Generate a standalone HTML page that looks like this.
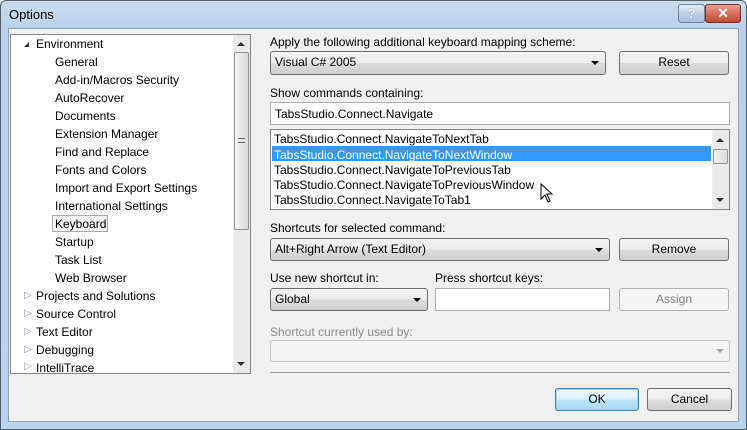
<!DOCTYPE html>
<html><head><style>
*{box-sizing:border-box;margin:0;padding:0}
body{width:747px;height:430px;overflow:hidden;background:#fff;font-family:"Liberation Sans",sans-serif;font-size:12px;color:#000;position:relative}
.frame{position:absolute;left:0;top:0;width:747px;height:430px;background:linear-gradient(#c9dbef,#b9d1ea 30px,#bcd3ec);border:1px solid #555e69;border-radius:6px 6px 0 0}
.title{position:absolute;left:8px;top:6px;font-size:13px;color:#000}
.client{position:absolute;left:8px;top:28px;width:731px;height:394px;background:#f0f0f0;border:1px solid #8ea4bd}
.a{position:absolute}
.btn{position:absolute;border:1px solid #707070;border-radius:3px;background:linear-gradient(#f2f2f2 0,#ebebeb 50%,#dddddd 50%,#cfcfcf);text-align:center;line-height:21px}
.combo{position:absolute;border:1px solid #707070;border-radius:3px;background:linear-gradient(#f2f2f2 0,#ebebeb 50%,#dddddd 50%,#cfcfcf);padding-left:4px;line-height:21px}
.combo:after{content:"";position:absolute;right:6px;top:9px;border-left:4px solid transparent;border-right:4px solid transparent;border-top:4px solid #000}
.box{position:absolute;background:#fff;border:1px solid #828790}
.t{position:absolute;white-space:nowrap;transform:translateY(1px)}
.lbl{position:absolute;white-space:nowrap;transform:translateY(1px)}
.sb{position:absolute;background:#e9e9e9;border-left:1px solid #eee}
</style></head><body>
<div class="frame">
<div class="title">Options</div>
<div class="a" style="left:677px;top:3px;width:27px;height:19px;border:1px solid #6d8199;border-radius:3px;background:linear-gradient(#e2ecf7,#bcd0e6 50%,#a9c0db);text-align:center;font-weight:bold;color:#fff;text-shadow:0 0 1px #333;line-height:17px;font-size:13px">?</div>
<div class="a" style="left:704px;top:3px;width:36px;height:19px;border:1px solid #7e2f25;border-radius:3px;background:linear-gradient(#e8a293,#d4725f 50%,#c24a34);text-align:center;font-weight:bold;color:#fff;line-height:17px;font-size:14px">✕</div>
</div>
<div class="client"></div>

<div class="box" style="left:10px;top:34px;width:241px;height:340px"></div>
<div class="sb" style="left:233px;top:35px;width:17px;height:338px"></div>
<div class="a" style="left:237px;top:42px;border-left:4px solid transparent;border-right:4px solid transparent;border-bottom:4px solid #333"></div>
<div class="a" style="left:234px;top:52px;width:15px;height:178px;border:1px solid #959595;border-radius:2px;background:linear-gradient(90deg,#f3f3f3,#dadada)"></div>
<div class="a" style="left:238px;top:138px;width:7px;height:5px;border-top:1px solid #666;border-bottom:1px solid #666"></div>
<div class="a" style="left:237px;top:362px;border-left:4px solid transparent;border-right:4px solid transparent;border-top:4px solid #333"></div>
<div class="a" style="left:24px;top:42px;border-left:5px solid transparent;border-bottom:5px solid #333"></div>
<div class="t" style="left:36px;top:36px">Environment</div>
<div class="t" style="left:55px;top:54px">General</div>
<div class="t" style="left:55px;top:72px">Add-in/Macros Security</div>
<div class="t" style="left:55px;top:90px">AutoRecover</div>
<div class="t" style="left:55px;top:108px">Documents</div>
<div class="t" style="left:55px;top:126px">Extension Manager</div>
<div class="t" style="left:55px;top:144px">Find and Replace</div>
<div class="t" style="left:55px;top:162px">Fonts and Colors</div>
<div class="t" style="left:55px;top:180px">Import and Export Settings</div>
<div class="t" style="left:55px;top:198px">International Settings</div>
<div class="a" style="left:52px;top:215px;width:56px;height:17px;border:1px solid #aaa;background:#f3f3f3"></div>
<div class="t" style="left:55px;top:216px">Keyboard</div>
<div class="t" style="left:55px;top:234px">Startup</div>
<div class="t" style="left:55px;top:252px">Task List</div>
<div class="t" style="left:55px;top:270px">Web Browser</div>
<div class="t" style="left:24px;top:289px;color:#999;font-size:10px">▷</div>
<div class="t" style="left:36px;top:288px">Projects and Solutions</div>
<div class="t" style="left:24px;top:307px;color:#999;font-size:10px">▷</div>
<div class="t" style="left:36px;top:306px">Source Control</div>
<div class="t" style="left:24px;top:325px;color:#999;font-size:10px">▷</div>
<div class="t" style="left:36px;top:324px">Text Editor</div>
<div class="t" style="left:24px;top:343px;color:#999;font-size:10px">▷</div>
<div class="t" style="left:36px;top:342px">Debugging</div>
<div class="a" style="left:11px;top:358px;width:222px;height:15px;overflow:hidden"><div class="t" style="left:13px;top:2px;color:#999;font-size:10px">▷</div><div class="t" style="left:25px;top:2px">IntelliTrace</div></div>

<div class="lbl" style="left:270px;top:34px">Apply the following additional keyboard mapping scheme:</div>
<div class="combo" style="left:270px;top:51px;width:336px;height:24px">Visual C# 2005</div>
<div class="btn" style="left:619px;top:51px;width:110px;height:24px">Reset</div>
<div class="lbl" style="left:270px;top:85px">Show commands containing:</div>
<div class="box" style="left:270px;top:102px;width:460px;height:23px;border-color:#abadb3;padding:4px 4px">TabsStudio.Connect.Navigate</div>
<div class="box" style="left:270px;top:129px;width:460px;height:81px"></div>
<div class="a" style="left:272px;top:146px;width:439px;height:15px;background:#3399ff"></div>
<div class="t" style="left:274px;top:131px">TabsStudio.Connect.NavigateToNextTab</div>
<div class="t" style="left:274px;top:147px;color:#fff">TabsStudio.Connect.NavigateToNextWindow</div>
<div class="t" style="left:274px;top:162px">TabsStudio.Connect.NavigateToPreviousTab</div>
<div class="t" style="left:274px;top:177px">TabsStudio.Connect.NavigateToPreviousWindow</div>
<div class="t" style="left:274px;top:192px">TabsStudio.Connect.NavigateToTab1</div>
<svg class="a" style="left:540px;top:183px" width="14" height="20"><path d="M1 1 L1 16 L5 12 L8 19 L10 18 L7 11 L12 11 Z" fill="#fff" stroke="#000"/></svg>
<div class="sb" style="left:712px;top:130px;width:17px;height:79px"></div>
<div class="a" style="left:716px;top:138px;border-left:4px solid transparent;border-right:4px solid transparent;border-bottom:4px solid #333"></div>
<div class="a" style="left:713px;top:149px;width:15px;height:15px;border:1px solid #959595;border-radius:2px;background:linear-gradient(90deg,#f3f3f3,#dadada)"></div>
<div class="a" style="left:716px;top:198px;border-left:4px solid transparent;border-right:4px solid transparent;border-top:4px solid #333"></div>
<div class="lbl" style="left:270px;top:220px">Shortcuts for selected command:</div>
<div class="combo" style="left:270px;top:238px;width:340px;height:23px">Alt+Right Arrow (Text Editor)</div>
<div class="btn" style="left:619px;top:238px;width:110px;height:23px">Remove</div>
<div class="lbl" style="left:270px;top:270px">Use new shortcut in:</div>
<div class="lbl" style="left:435px;top:270px">Press shortcut keys:</div>
<div class="combo" style="left:270px;top:288px;width:158px;height:23px">Global</div>
<div class="box" style="left:435px;top:288px;width:175px;height:23px;border-color:#abadb3"></div>
<div class="btn" style="left:619px;top:288px;width:110px;height:23px;background:#f4f4f4;border-color:#adb2b5;color:#838383">Assign</div>
<div class="lbl" style="left:270px;top:324px;color:#8d8d8d">Shortcut currently used by:</div>
<div class="a" style="left:270px;top:340px;width:460px;height:22px;border:1px solid #c5c5c5;border-radius:3px;background:#f4f4f4"></div>
<div class="a" style="left:716px;top:349px;border-left:4px solid transparent;border-right:4px solid transparent;border-top:4px solid #a0a0a0"></div>
<div class="a" style="left:270px;top:372px;width:460px;height:1px;background:#a0a0a0"></div>
<div class="btn" style="left:555px;top:388px;width:84px;height:23px;border-color:#3c7fb1;background:linear-gradient(#eaf6fd,#d9f0fc 50%,#bee6fd 50%,#a7d9f5);box-shadow:inset 0 0 0 1px #9cd5f5">OK</div>
<div class="btn" style="left:647px;top:388px;width:85px;height:23px">Cancel</div>
</body></html>
